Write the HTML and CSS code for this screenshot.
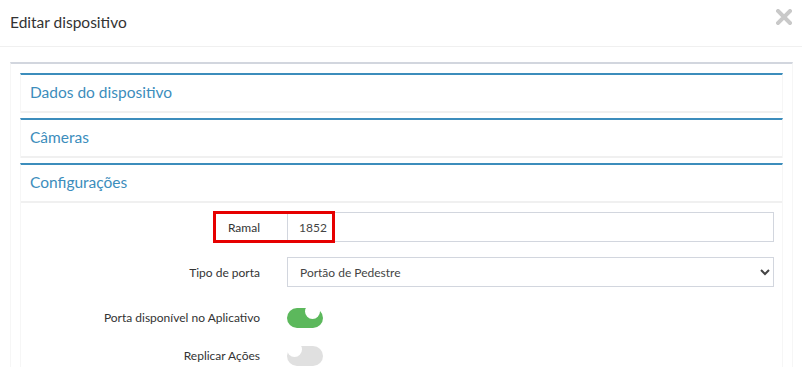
FILE: index.html
```html
<!DOCTYPE html>
<html lang="pt">
<head>
<meta charset="utf-8">
<title>Editar dispositivo</title>
<link rel="stylesheet" href="styles.css">
</head>
<body>
<div class="modal">
  <div class="modal-header">
    <h4 class="modal-title">Editar dispositivo</h4>
    <button class="close" type="button" aria-label="Fechar">
      <svg width="16" height="16" viewBox="0 0 16 16"><path d="M2 2 L14 14 M14 2 L2 14" stroke="#c9c9c9" stroke-width="4" stroke-linecap="square"/></svg>
    </button>
  </div>
  <div class="modal-body">
    <div class="box">
      <div class="panel">
        <div class="panel-heading">Dados do dispositivo</div>
      </div>
      <div class="panel">
        <div class="panel-heading">Câmeras</div>
      </div>
      <div class="panel">
        <div class="panel-heading">Configurações</div>
        <div class="panel-body">
          <div class="form-row">
            <label class="form-label">Ramal</label>
            <input class="form-control" type="text" value="1852">
            <div class="highlight"></div>
          </div>
          <div class="form-row">
            <label class="form-label">Tipo de porta</label>
            <select class="form-control select">
              <option>Portão de Pedestre</option>
            </select>
          </div>
          <div class="form-row switch-row first">
            <label class="form-label">Porta disponível no Aplicativo</label>
            <span class="switch on"><span class="knob"></span></span>
          </div>
          <div class="form-row switch-row">
            <label class="form-label">Replicar Ações</label>
            <span class="switch off"><span class="knob"></span></span>
          </div>
        </div>
      </div>
    </div>
  </div>
</div>
</body>
</html>
```
FILE: styles.css
```css
* { box-sizing: border-box; }
html, body { margin: 0; padding: 0; background: #fff; }
body {
  font-family: Lato, "Open Sans", sans-serif;
  color: #333;
  overflow: hidden;
}
.modal { width: 802px; height: 367px; overflow: hidden; }
.modal-header {
  height: 47px;
  border-bottom: 1px solid #f0f0f0;
  display: flex;
  align-items: center;
  justify-content: space-between;
  padding: 0 10px 2px 10px;
}
.modal-title {
  margin: 0;
  font-size: 15.5px;
  font-weight: 400;
  color: #333;
}
.close {
  border: 0;
  background: none;
  padding: 0;
  margin-top: -10px;
  width: 16px;
  height: 16px;
  display: block;
}
.close svg { display: block; }
.modal-body { padding: 15px 9px 0 10px; }
.box {
  border-top: 2px solid #d2d6de;
  border-left: 1px solid #f6f6f6;
  border-right: 1px solid #f6f6f6;
  padding: 9px 9px 0 9px;
}
.panel {
  border-top: 2px solid #3c8dbc;
  border-left: 1px solid #f6f6f6;
  border-right: 1px solid #f6f6f6;
  margin-bottom: 5px;
}
.panel-heading {
  height: 38px;
  border-bottom: 2px solid #f0f0f0;
  padding: 0 9px 3px 9px;
  display: flex;
  align-items: center;
  font-size: 15.5px;
  color: #3c8dbc;
}
.panel-body { padding: 9px 8px 0 0; }
.form-row {
  position: relative;
  display: grid;
  grid-template-columns: 239px 1fr;
  column-gap: 27px;
  align-items: center;
  margin-bottom: 15px;
}
.form-label {
  text-align: right;
  font-size: 12px;
  color: #333;
}
.form-control {
  height: 30px;
  border: 1px solid #d2d6de;
  border-radius: 0;
  padding: 0 11px;
  font-family: inherit;
  font-size: 12px;
  color: #444;
  background: #fff;
  width: 100%;
  outline: none;
}
.select { padding-left: 8px; }
.highlight {
  position: absolute;
  left: 192px;
  top: -1px;
  width: 122px;
  height: 32px;
  border: 3px solid #e60000;
  pointer-events: none;
}
.switch-row { margin-bottom: 0; height: 38px; }
.switch-row.first { margin-top: -4px; }
.switch {
  position: relative;
  display: block;
  width: 36px;
  height: 20px;
  border-radius: 10px;
  margin-top: 1px;
}
.switch.on { background: #5cb85c; }
.switch.off { background: #e0e0e0; }
.knob {
  position: absolute;
  top: -4px;
  width: 15px;
  height: 15px;
  border-radius: 50%;
  background: #fff;
}
.switch.on .knob { right: 3px; }
.switch.off .knob { left: 0; }
```
